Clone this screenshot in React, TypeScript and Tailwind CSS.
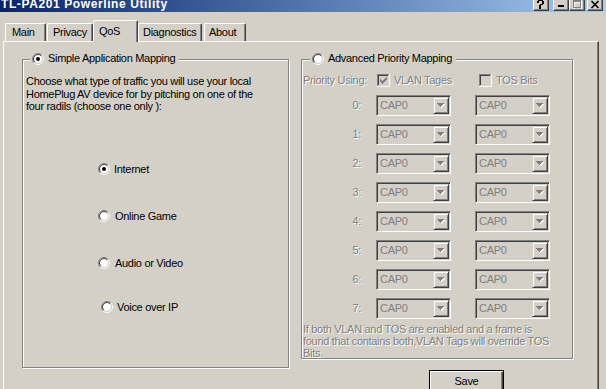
import React from "react";

const DIS = "text-[#808080] [text-shadow:1px_1px_0_#fff]";

function Radio({ checked }: { checked?: boolean }) {
  const c = 6;
  const arc = (r: number, color: string, tl: boolean) => {
    const d = r * Math.SQRT1_2;
    const s = tl ? [c - d, c + d] : [c + d, c - d];
    const e = tl ? [c + d, c - d] : [c - d, c + d];
    return (
      <path
        d={`M${s[0]} ${s[1]} A${r} ${r} 0 0 1 ${e[0]} ${e[1]}`}
        stroke={color}
        fill="none"
        strokeWidth={1}
      />
    );
  };
  return (
    <svg width="12" height="12" viewBox="0 0 12 12" className="shrink-0 block">
      <circle cx="6" cy="6" r="4.2" fill="#fff" />
      {arc(5.5, "#808080", true)}
      {arc(5.5, "#ffffff", false)}
      {arc(4.5, "#404040", true)}
      {arc(4.5, "#d4d0c8", false)}
      {checked && <circle cx="6" cy="6" r="2" fill="#000" />}
    </svg>
  );
}

function Check({ checked }: { checked?: boolean }) {
  const pix = ["......x", ".....xx", "x...xxx", "xx.xxx.", "xxxxx..", ".xxx...", "..x...."];
  const rects: React.ReactNode[] = [];
  if (checked) {
    pix.forEach((row, y) =>
      row.split("").forEach((ch, x) => {
        if (ch === "x")
          rects.push(<rect key={`${x}-${y}`} x={3 + x} y={3 + y} width={1} height={1} fill="#808080" />);
      })
    );
  }
  return (
    <svg width="13" height="13" viewBox="0 0 13 13" shapeRendering="crispEdges" className="shrink-0 block">
      <rect x="0" y="0" width="13" height="13" fill="#fff" />
      <rect x="0" y="0" width="12" height="1" fill="#808080" />
      <rect x="0" y="0" width="1" height="12" fill="#808080" />
      <rect x="1" y="1" width="10" height="1" fill="#404040" />
      <rect x="1" y="1" width="1" height="10" fill="#404040" />
      <rect x="1" y="11" width="11" height="1" fill="#d4d0c8" />
      <rect x="11" y="1" width="1" height="11" fill="#d4d0c8" />
      <rect x="2" y="2" width="9" height="9" fill="#d4d0c8" />
      {rects}
    </svg>
  );
}

function Combo() {
  return (
    <div className="flex h-[21px] w-[75px] shrink-0 border border-t-[#808080] border-l-[#808080] border-b-white border-r-white p-[1px] shadow-[inset_1px_1px_0_#404040,inset_-1px_-1px_0_#d4d0c8]">
      <span className="flex-1 pl-[2px] leading-[17px] text-[#808080]">CAP0</span>
      <div className="flex h-[17px] w-[16px] items-center justify-center border border-t-[#d4d0c8] border-l-[#d4d0c8] border-b-[#404040] border-r-[#404040] shadow-[inset_1px_1px_0_#fff,inset_-1px_-1px_0_#808080]">
        <svg width="8" height="5" viewBox="0 0 8 5" shapeRendering="crispEdges" className="block">
          <path d="M1 1h7v1h-1v1h-1v1h-1v1h-1v-1h-1v-1h-1v-1h-1z" fill="#fff" />
          <path d="M0 0h7v1h-1v1h-1v1h-1v1h-1v-1h-1v-1h-1v-1h-1z" fill="#808080" />
        </svg>
      </div>
    </div>
  );
}

function ComboRow({ n }: { n: number }) {
  return (
    <div className="flex h-[21px] items-center">
      <span className={`w-[73px] pr-[15px] text-right ${DIS}`}>{n}:</span>
      <Combo />
      <div className="ml-[24px]">
        <Combo />
      </div>
    </div>
  );
}

export default function App() {
  return (
    <div className="h-[389px] w-[606px] overflow-hidden bg-[#d4d0c8] font-['Liberation_Sans',Arial,sans-serif] text-[11px] tracking-[-0.3px] text-black">
      {/* Title bar */}
      <div className="flex h-[12px] items-start bg-linear-to-r from-[#0a246a] to-[#a6caf0]">
        <span className="ml-[1px] block whitespace-nowrap text-[12px] font-bold leading-[9px] tracking-[0.6px] text-white">
          TL-PA201 Powerline Utility
        </span>
        <div className="flex-1" />
        <div className="mr-[3px] flex">
          <div className="flex h-[11px] w-[16px] items-start justify-center border-l border-r border-b border-l-white border-r-[#404040] border-b-[#404040] bg-[#d4d0c8] shadow-[inset_-1px_-1px_0_#808080]">
            <svg width="8" height="9" viewBox="0 0 8 9" shapeRendering="crispEdges" className="block">
              <path d="M1 0h5v1h1v3h-1v1h-2v2h-2v-2h1v-1h2v-3h-3v2h-2v-2h1z" fill="#000" />
              <rect x="2" y="7" width="2" height="2" fill="#000" />
            </svg>
          </div>
          <div className="ml-[4px] flex h-[11px] w-[16px] items-start justify-center border-l border-r border-b border-l-white border-r-[#404040] border-b-[#404040] bg-[#d4d0c8] shadow-[inset_-1px_-1px_0_#808080]">
            <svg width="8" height="9" viewBox="0 0 8 9" shapeRendering="crispEdges" className="block">
              <rect x="1" y="5" width="6" height="2" fill="#000" />
            </svg>
          </div>
          <div className="flex h-[11px] w-[16px] items-start justify-center border-l border-r border-b border-l-white border-r-[#404040] border-b-[#404040] bg-[#d4d0c8] shadow-[inset_-1px_-1px_0_#808080]">
            <svg width="10" height="9" viewBox="0 0 10 9" shapeRendering="crispEdges" className="block">
              <path d="M2 1h8v9h-8z M3 3v6h6v-6z" fill="#fff" fillRule="evenodd" />
              <path d="M1 0h8v8h-8z M2 2v5h6v-5z" fill="#808080" fillRule="evenodd" />
            </svg>
          </div>
          <div className="ml-[2px] flex h-[11px] w-[16px] items-start justify-center border-l border-r border-b border-l-white border-r-[#404040] border-b-[#404040] bg-[#d4d0c8] shadow-[inset_-1px_-1px_0_#808080]">
            <svg width="10" height="9" viewBox="0 0 10 9" className="block">
              <path d="M1.5 1 L8.5 8 M8.5 1 L1.5 8" stroke="#000" strokeWidth="1.6" />
            </svg>
          </div>
        </div>
      </div>

      {/* Tabs */}
      <div className="flex h-[29px] items-end">
        <div className="ml-[5px] flex h-[18px] w-[41px] items-center rounded-t-[2px] border-l border-t border-r border-l-white border-t-white border-r-[#404040] pl-[6px] shadow-[inset_-1px_0_0_#808080]">
          Main
        </div>
        <div className="ml-[1px] flex h-[18px] w-[46px] items-center rounded-t-[2px] border-l border-t border-r border-l-white border-t-white border-r-[#404040] pl-[5px] shadow-[inset_-1px_0_0_#808080]">
          Privacy
        </div>
        <div className="relative z-10 mb-[-1px] flex h-[22px] w-[45px] items-center rounded-t-[2px] border-l border-t border-r border-l-white border-t-white border-r-[#404040] bg-[#d4d0c8] pb-[1px] pl-[5px] shadow-[inset_-1px_0_0_#808080]">
          QoS
        </div>
        <div className="flex h-[18px] w-[64px] items-center rounded-t-[2px] border-l border-t border-r border-l-white border-t-white border-r-[#404040] pl-[4px] shadow-[inset_-1px_0_0_#808080]">
          Diagnostics
        </div>
        <div className="ml-[2px] flex h-[18px] w-[42px] items-center rounded-t-[2px] border-l border-t border-r border-l-white border-t-white border-r-[#404040] pl-[4px] shadow-[inset_-1px_0_0_#808080]">
          About
        </div>
      </div>

      {/* Panel */}
      <div className="ml-[3px] flex h-[348px] w-[596px] items-start border-l border-t border-r border-l-white border-t-white border-r-[#404040] pl-[18px] pt-[17px] shadow-[inset_-1px_0_0_#808080]">
        {/* Left group */}
        <div className="relative flex h-[309px] w-[267px] shrink-0 flex-col border border-[#808080] pl-[3px] pt-[15px] shadow-[inset_1px_1px_0_#fff,1px_1px_0_#fff]">
          <div className="absolute left-[7px] top-[-8px] flex h-[13px] items-center gap-[4px] bg-[#d4d0c8] pl-[2px] pr-[4px]">
            <Radio checked />
            <span className="whitespace-nowrap">Simple Application Mapping</span>
          </div>
          <p className="whitespace-nowrap leading-[12.5px]">
            Choose what type of traffic you will use your local
            <br />
            HomePlug AV device for by pitching on one of the
            <br />
            four radils (choose one only ):
          </p>
          <div className="ml-[72px] mt-[50px] flex h-[13px] items-center gap-[4px]">
            <Radio checked />
            <span>Internet</span>
          </div>
          <div className="ml-[72px] mt-[34px] flex h-[13px] items-center gap-[5px]">
            <Radio />
            <span>Online Game</span>
          </div>
          <div className="ml-[72px] mt-[34px] flex h-[13px] items-center gap-[5px]">
            <Radio />
            <span>Audio or Video</span>
          </div>
          <div className="ml-[75px] mt-[31px] flex h-[13px] items-center gap-[4px]">
            <Radio />
            <span>Voice over IP</span>
          </div>
        </div>

        {/* Right column */}
        <div className="ml-[12px] flex flex-col">
          <div className="relative flex h-[300px] w-[272px] flex-col border border-[#808080] pl-[1px] pt-[14px] shadow-[inset_1px_1px_0_#fff,1px_1px_0_#fff]">
            <div className="absolute left-[8px] top-[-8px] flex h-[13px] items-center gap-[4px] bg-[#d4d0c8] pl-[2px] pr-[4px]">
              <Radio />
              <span className="whitespace-nowrap">Advanced Priority Mapping</span>
            </div>
            <div className="flex h-[13px] items-center">
              <span className={`w-[74px] whitespace-nowrap ${DIS}`}>Priority Using:</span>
              <div className="flex w-[102px] items-center gap-[4px]">
                <Check checked />
                <span className={`whitespace-nowrap ${DIS}`}>VLAN Tages</span>
              </div>
              <div className="flex items-center gap-[4px]">
                <Check />
                <span className={`whitespace-nowrap ${DIS}`}>TOS Bits</span>
              </div>
            </div>
            <div className="mt-[8px] flex flex-col gap-[8px]">
              {[0, 1, 2, 3, 4, 5, 6, 7].map((n) => (
                <ComboRow key={n} n={n} />
              ))}
            </div>
            <p className={`mt-[4px] whitespace-nowrap leading-[12px] ${DIS}`}>
              If both VLAN and TOS are enabled and a frame is
              <br />
              found that contains both,VLAN Tags will override TOS
              <br />
              Bits.
            </p>
          </div>
          <button className="ml-[128px] mt-[11px] flex h-[23px] w-[75px] items-center justify-center border border-black bg-[#d4d0c8] shadow-[inset_1px_1px_0_#fff,inset_-1px_-1px_0_#404040,inset_-2px_-2px_0_#808080]">
            Save
          </button>
        </div>
      </div>
    </div>
  );
}
